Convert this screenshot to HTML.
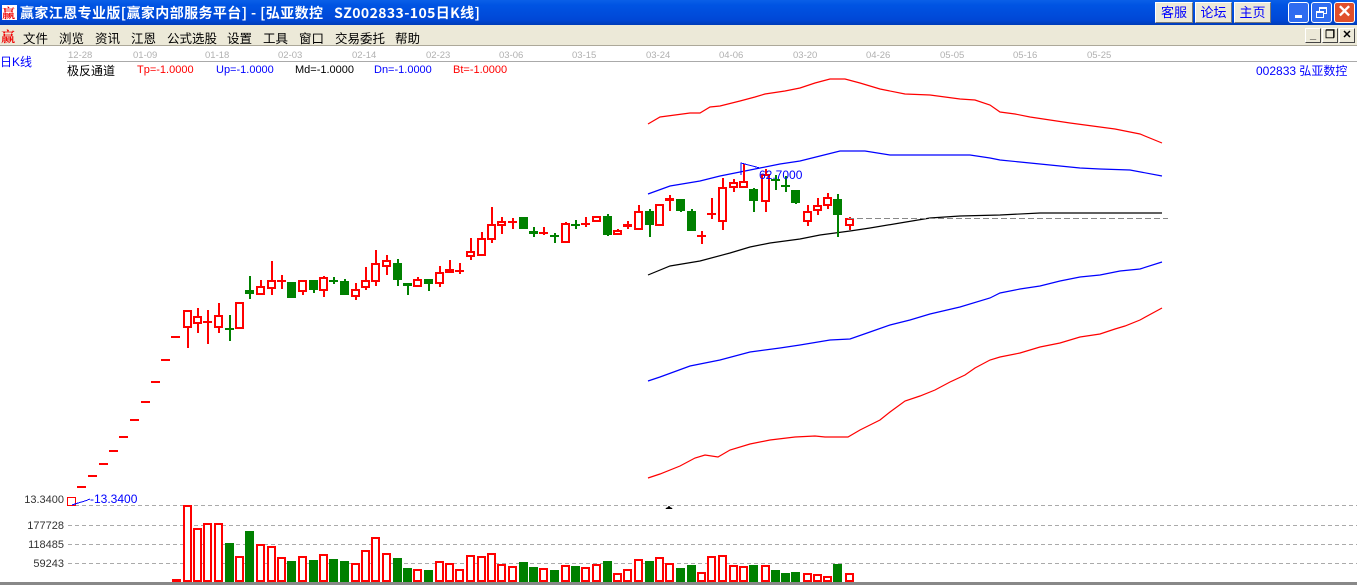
<!DOCTYPE html>
<html><head><meta charset="utf-8"><style>
*{margin:0;padding:0;box-sizing:border-box}
body{width:1357px;height:587px;overflow:hidden;background:#fff;position:relative;font-family:"Liberation Sans","Noto Sans CJK SC",sans-serif}
.title{position:absolute;left:0;top:0;width:1357px;height:25px;background:linear-gradient(#0a5fe8,#0054e3 20%,#0047d6 80%,#003cb8);}
.title .t{position:absolute;left:20px;top:3px;color:#fff;font:bold 14px "Noto Sans CJK SC",sans-serif;letter-spacing:0.4px;white-space:nowrap}
.logo{position:absolute;left:2px;top:4px;width:15px;height:16px;color:#e00;font:bold 14px "Noto Serif CJK SC",serif;line-height:16px}
.btn{position:absolute;top:2px;height:21px;background:#ece9d8;border:1px solid #fff;border-right-color:#777;border-bottom-color:#777;color:#00f;font-size:13px;text-align:center;line-height:19px}
.wb{position:absolute;top:2px;width:21px;height:21px;border:1px solid #fff;border-radius:3px;background:#2f6cf0}
.menu{position:absolute;left:0;top:25px;width:1357px;height:21px;background:#ece9d8;border-bottom:1px solid #aca899}
.menu span{position:absolute;top:3px;font-size:12.5px;color:#000}
.mdi{position:absolute;top:28px;width:16px;height:15px;background:#ece9d8;border:1px solid #fff;border-right-color:#444;border-bottom-color:#444;font:bold 11px sans-serif;text-align:center;line-height:12px}
.sm{position:absolute;font-size:12px;white-space:nowrap}
</style></head><body>
<div class="title"><div class="logo" style="background:#fff;top:5px;height:15px;line-height:15px;font-size:13px">赢</div><div class="t">赢家江恩专业版[赢家内部服务平台] - [弘亚数控&nbsp;&nbsp;&nbsp;SZ002833-105日K线]</div>
<div class="btn" style="left:1155px;width:38px">客服</div><div class="btn" style="left:1195px;width:37px">论坛</div><div class="btn" style="left:1234px;width:37px">主页</div>
<div class="wb" style="left:1288px"><div style="position:absolute;left:6px;top:12px;width:7px;height:3px;background:#fff"></div></div>
<div class="wb" style="left:1311px"><div style="position:absolute;left:7px;top:4px;width:8px;height:7px;border:2px solid #fff;border-width:2px 1px 1px 1px"></div><div style="position:absolute;left:4px;top:8px;width:8px;height:7px;border:2px solid #fff;border-width:2px 1px 1px 1px;background:#2f6cf0"></div></div>
<div class="wb" style="left:1334px;background:#e0502c;color:#fff;font:bold 17px sans-serif;text-align:center;line-height:18px">✕</div>
</div>
<div class="menu">
<span style="left:1px;color:#e00;font-family:'Noto Serif CJK SC',serif;font-weight:bold;font-size:14px;top:2px">赢</span>
<span style="left:23px">文件</span><span style="left:59px">浏览</span><span style="left:95px">资讯</span><span style="left:131px">江恩</span><span style="left:167px">公式选股</span><span style="left:227px">设置</span><span style="left:263px">工具</span><span style="left:299px">窗口</span><span style="left:335px">交易委托</span><span style="left:395px">帮助</span>
</div>
<div class="mdi" style="left:1305px">_</div><div class="mdi" style="left:1322px">❐</div><div class="mdi" style="left:1339px">✕</div>
<div class="sm" style="left:0;top:53px;color:#00f">日K线</div>
<div class="sm" style="left:1256px;top:62px;color:#00f">002833 弘亚数控</div>
<div class="sm" style="left:67px;top:62px;color:#000">极反通道</div>
<div class="sm" style="left:137px;top:64px;color:#f00;font-size:11px">Tp=-1.0000</div>
<div class="sm" style="left:216px;top:64px;color:#00f;font-size:11px">Up=-1.0000</div>
<div class="sm" style="left:295px;top:64px;color:#000;font-size:11px">Md=-1.0000</div>
<div class="sm" style="left:374px;top:64px;color:#00f;font-size:11px">Dn=-1.0000</div>
<div class="sm" style="left:453px;top:64px;color:#f00;font-size:11px">Bt=-1.0000</div>
<svg id="s" width="1357" height="587" style="position:absolute;left:0;top:0" xmlns="http://www.w3.org/2000/svg" shape-rendering="crispEdges">
<line x1="67" y1="61.5" x2="1357" y2="61.5" stroke="#aaa"/>
<g font-size="9.5" fill="#b0b0b0" font-family="Liberation Sans">
<text x="68" y="58">12-28</text><text x="133" y="58">01-09</text><text x="205" y="58">01-18</text><text x="278" y="58">02-03</text><text x="352" y="58">02-14</text><text x="426" y="58">02-23</text><text x="499" y="58">03-06</text><text x="572" y="58">03-15</text><text x="646" y="58">03-24</text><text x="719" y="58">04-06</text><text x="793" y="58">03-20</text><text x="866" y="58">04-26</text><text x="940" y="58">05-05</text><text x="1013" y="58">05-16</text><text x="1087" y="58">05-25</text>
</g>
<g stroke="#aaa" stroke-dasharray="4,3"><line x1="68" y1="505.5" x2="1357" y2="505.5"/><line x1="68" y1="525.5" x2="1357" y2="525.5"/><line x1="68" y1="544.5" x2="1357" y2="544.5"/><line x1="68" y1="563.5" x2="1357" y2="563.5"/></g>
<rect x="0" y="582" width="1357" height="3" fill="#888"/>
<g font-size="11" fill="#333" text-anchor="end" font-family="Liberation Sans"><text x="64" y="503">13.3400</text><text x="64" y="529">177728</text><text x="64" y="548">118485</text><text x="64" y="567">59243</text></g>
<rect x="67" y="497" width="9" height="9" fill="#f00"/><rect x="68" y="498" width="7" height="7" fill="#fff"/>
<polyline points="72,505 78,503 85,501 90,499" fill="none" stroke="#00f"/>
<text x="90" y="503" font-size="12" fill="#00f">-13.3400</text>
<polygon points="669,506 665,509 673,509" fill="#000"/>
<g id="g"></g>
<text x="759" y="179" font-size="12" fill="#00f">62.7000</text>
<polyline points="741,175 741,163 760,168" fill="none" stroke="#00f"/>
<line x1="848" y1="218.5" x2="1168" y2="218.5" stroke="#888" stroke-dasharray="6,3"/>
</svg>
<script>
var g=document.getElementById('g'),h='';
function L(p,c){h+='<polyline shape-rendering="auto" fill="none" stroke="'+c+'" stroke-width="1.2" points="'+p+'"/>';}
L("648,124 660,117 690,113 700,113 710,107 720,106 740,101 755,97 765,94 785,91 800,88 815,83 830,79 845,79 860,83 880,89 905,94 930,95 945,97 960,99 975,100 990,105 1000,112 1015,114 1030,117 1050,120 1070,123 1100,127 1115,129 1140,134 1162,143","#f00");
L("648,194 670,186 700,181 720,176 740,172 760,168 780,164 800,161 820,156 840,151 865,151 890,155 905,155 970,155 990,158 1000,160 1020,162 1060,166 1080,168 1100,169 1130,170 1162,176","#00f");
L("648,275 670,266 700,261 730,253 750,247 770,243 800,239 820,235 850,231 870,228 900,223 930,218 960,216 1000,215 1040,213 1100,213 1162,213","#000");
L("648,381 660,377 690,366 720,360 750,352 780,348 800,345 830,340 850,339 870,332 890,325 910,320 930,314 960,307 990,298 1000,293 1020,289 1040,286 1060,281 1080,277 1100,275 1120,271 1140,269 1162,262","#00f");
L("648,478 660,474 680,466 695,458 705,455 718,457 730,450 750,444 770,440 795,437 815,436 825,437 848,437 860,430 880,420 890,412 905,401 920,396 935,390 950,382 965,375 975,368 990,360 1000,357 1020,353 1040,347 1060,343 1080,337 1100,334 1115,329 1125,326 1140,320 1162,308","#f00");
[[77,486],[88,475],[99,463],[109,450],[119,436],[130,419],[141,401],[151,381],[161,359],[171,336]].forEach(function(d){h+='<rect x="'+d[0]+'" y="'+d[1]+'" width="9" height="2" fill="#f00"/>';});
var C=[[183,'r',310,328,310,348],[193,'r',316,324,308,333],[203,'r',321,321,310,344],[214,'r',315,328,303,333],[225,'g',328,328,315,341],[235,'r',302,329,302,329],[245,'g',290,294,276,299],[256,'r',286,295,280,295],[267,'r',280,289,261,295],[277,'r',280,280,275,289],[287,'g',282,298,282,298],[298,'r',280,292,280,295],[309,'g',280,290,280,293],[319,'r',277,291,276,297],[329,'g',280,280,277,284],[340,'g',281,295,279,295],[351,'r',289,297,283,300],[361,'r',280,288,267,290],[371,'r',263,282,250,286],[382,'r',260,267,255,275],[393,'g',263,280,259,286],[403,'g',283,286,283,295],[413,'r',279,287,277,287],[424,'g',279,284,279,291],[435,'r',272,284,266,287],[445,'r',269,273,260,273],[455,'r',270,270,263,274],[466,'r',251,257,238,260],[477,'r',238,256,232,256],[487,'r',224,240,207,243],[497,'r',221,226,217,234],[508,'r',221,221,218,229],[519,'g',217,229,217,229],[529,'g',231,234,227,237],[539,'r',232,234,227,235],[550,'g',235,237,233,243],[561,'r',223,243,222,243],[571,'g',224,224,220,229],[581,'r',223,225,217,227],[592,'r',216,222,216,222],[603,'g',216,235,214,236],[613,'r',230,235,229,235],[623,'r',224,227,221,229],[634,'r',211,230,205,230],[645,'g',211,225,209,237],[655,'r',204,226,204,226],[665,'r',198,201,195,211],[676,'g',199,211,199,212],[687,'g',211,231,209,231],[697,'r',235,235,231,244],[707,'r',213,215,198,219],[718,'r',187,222,178,230],[729,'r',182,188,179,192],[739,'r',181,188,164,188],[749,'g',189,201,188,212],[761,'r',174,202,169,212],[771,'g',179,179,175,190],[781,'g',185,185,176,192],[791,'g',190,203,190,204],[803,'r',211,222,205,226],[813,'r',205,211,198,215],[823,'r',197,206,193,209],[833,'g',199,215,194,237],[845,'r',218,226,217,230]];
function box(x,t,b){return '<rect x="'+x+'" y="'+t+'" width="9" height="'+(b-t)+'" fill="#f00"/><rect x="'+(x+2)+'" y="'+(t+2)+'" width="5" height="'+Math.max(0,b-t-4)+'" fill="#fff"/>';}
C.forEach(function(c){var x=c[0],col=c[1]=='r'?'#f00':'#008000';
h+='<rect x="'+(x+4)+'" y="'+c[4]+'" width="2" height="'+(c[5]-c[4])+'" fill="'+col+'"/>';
if(c[3]-c[2]<3){h+='<rect x="'+x+'" y="'+c[2]+'" width="9" height="2" fill="'+col+'"/>';}
else if(c[1]=='r'){h+=box(x,c[2],c[3]);}
else h+='<rect x="'+x+'" y="'+c[2]+'" width="9" height="'+(c[3]-c[2])+'" fill="#008000"/>';});
var V=[505,528,523,523,543,556,531,544,546,557,561,556,560,554,559,561,563,550,537,553,558,568,569,570,561,563,569,555,556,553,564,566,562,567,568,570,565,566,567,564,561,573,569,559,561,557,563,568,565,572,556,555,565,566,565,565,570,573,572,573,574,576,564,573];
h+='<rect x="172" y="579" width="9" height="3" fill="#f00"/>';
C.forEach(function(c,i){var t=V[i],x=c[0];if(c[1]=='r')h+=box(x,t,582);else h+='<rect x="'+x+'" y="'+t+'" width="9" height="'+(582-t)+'" fill="#008000"/>';});
g.innerHTML=h;
</script>
</body></html>
